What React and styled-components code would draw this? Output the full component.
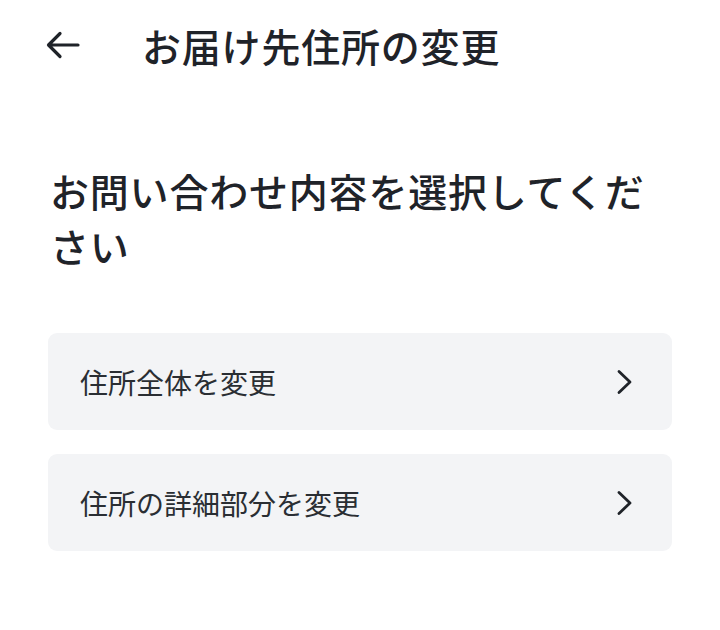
import styled, { createGlobalStyle } from 'styled-components';

const GlobalStyle = createGlobalStyle`
  html, body {
    margin: 0;
    padding: 0;
    background: #ffffff;
  }
  body {
    font-family: "Noto Sans CJK JP", "Noto Sans", sans-serif;
    color: #1f2329;
  }
`;

function App() {
  return (
    <Page>
      <GlobalStyle />
      <Header>
        <BackButton aria-label="戻る">
          <svg width="34" height="28" viewBox="0 0 34 28" fill="none">
            <path d="M32 14H3M14 2.5L2.5 14L14 25.5" stroke="#1f2329" strokeWidth="3.2" strokeLinecap="round" strokeLinejoin="round" />
          </svg>
        </BackButton>
        <Title>お届け先住所の変更</Title>
      </Header>
      <Content>
        <Heading>お問い合わせ内容を選択してください</Heading>
        <OptionList>
          <Option>
            <OptionLabel>住所全体を変更</OptionLabel>
            <Chevron />
          </Option>
          <Option>
            <OptionLabel>住所の詳細部分を変更</OptionLabel>
            <Chevron />
          </Option>
        </OptionList>
      </Content>
    </Page>
  );
}

function Chevron() {
  return (
    <ChevronIcon width="18" height="26" viewBox="0 0 18 26" fill="none">
      <path d="M3 2.5L14 13L3 23.5" stroke="#1f2329" strokeWidth="2.8" strokeLinecap="round" strokeLinejoin="round" />
    </ChevronIcon>
  );
}

export default App;

const Page = styled.div`
  width: 720px;
  min-height: 630px;
  box-sizing: border-box;
  padding: 0 48px;
`;

const Header = styled.header`
  display: flex;
  align-items: center;
  height: 90px;
  gap: 62px;
`;

const BackButton = styled.button`
  display: flex;
  align-items: center;
  padding: 0;
  margin: 0 0 0 -2px;
  border: none;
  background: none;
  cursor: pointer;
`;

const Title = styled.h1`
  margin: 0;
  font-size: 39px;
  font-weight: 500;
  letter-spacing: 0.8px;
  line-height: 1;
`;

const Content = styled.main`
  padding-top: 73px;
`;

const Heading = styled.h2`
  margin: 0 0 0 2px;
  font-size: 39px;
  font-weight: 500;
  line-height: 55px;
  letter-spacing: 0.8px;
`;

const OptionList = styled.div`
  display: flex;
  flex-direction: column;
  gap: 24px;
  margin-top: 60px;
`;

const Option = styled.button`
  display: flex;
  align-items: center;
  justify-content: space-between;
  width: 100%;
  height: 97px;
  padding: 0 38px 0 32px;
  box-sizing: border-box;
  border: none;
  border-radius: 9px;
  background: #f3f4f6;
  font-family: inherit;
  text-align: left;
  cursor: pointer;
`;

const OptionLabel = styled.span`
  font-size: 28px;
  font-weight: 400;
  color: #2a2e33;
`;

const ChevronIcon = styled.svg`
  flex: none;
`;
